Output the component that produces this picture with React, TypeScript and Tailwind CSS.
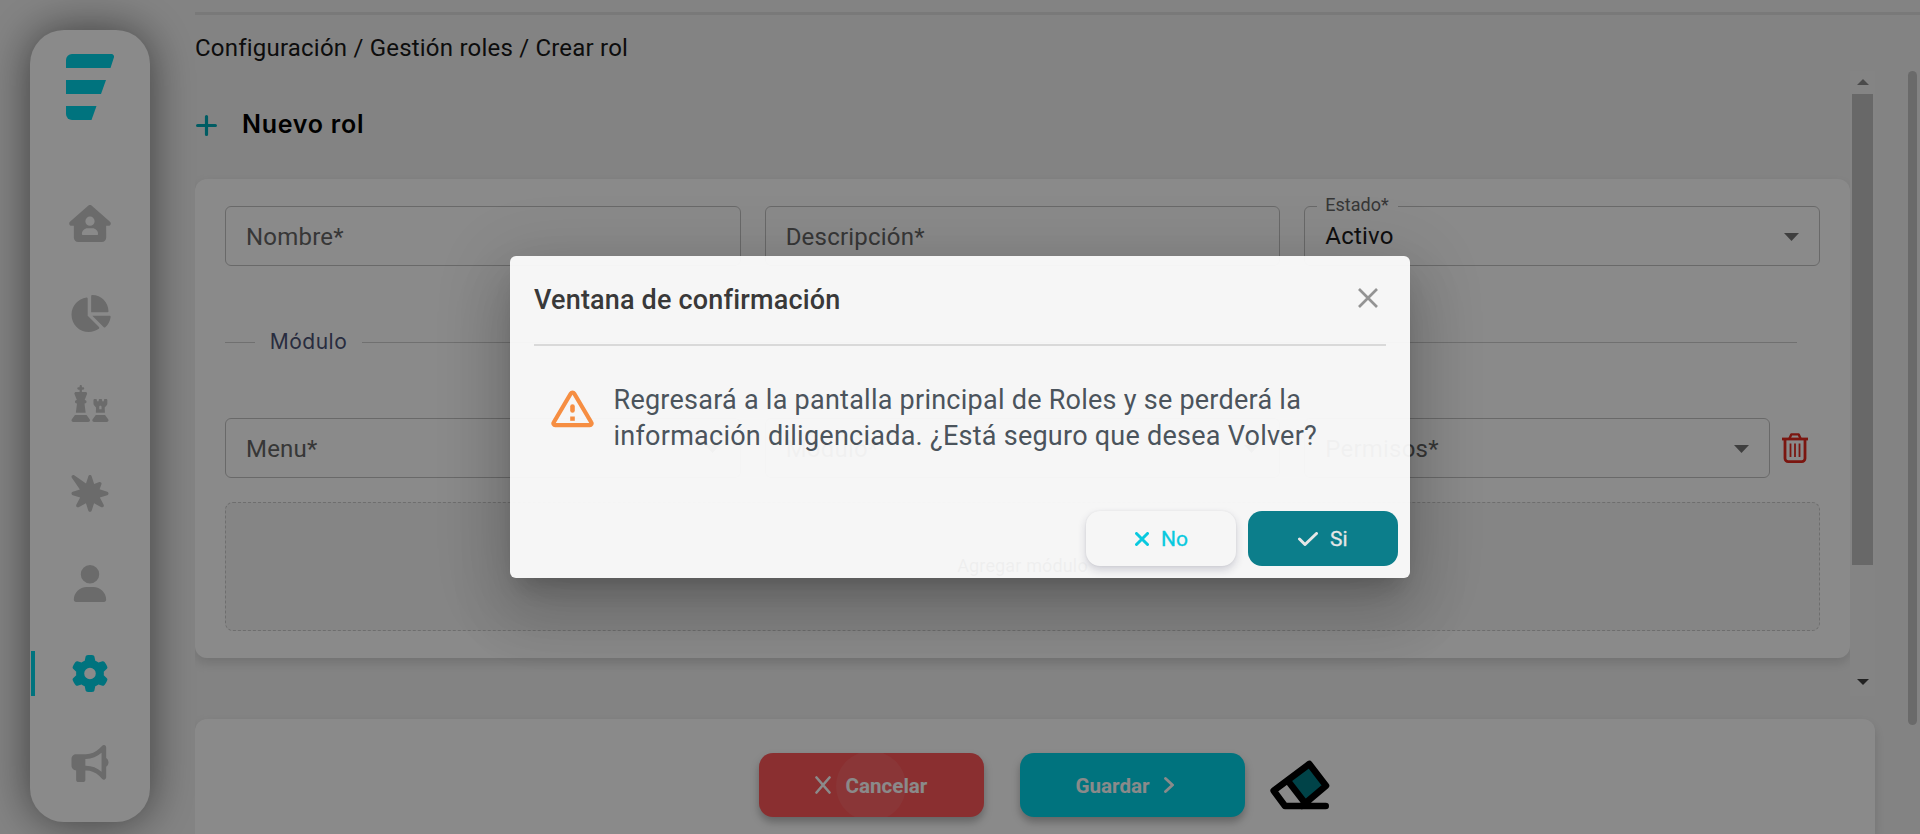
import React from "react";
import {
  FaHouseUser,
  FaChartPie,
  FaChess,
  FaBurst,
  FaUser,
  FaGear,
  FaBullhorn,
} from "react-icons/fa6";

const menu = [
  { icon: FaHouseUser, name: "inicio" },
  { icon: FaChartPie, name: "reportes" },
  { icon: FaChess, name: "estrategia" },
  { icon: FaBurst, name: "eventos" },
  { icon: FaUser, name: "usuarios" },
  { icon: FaGear, name: "configuracion", active: true },
  { icon: FaBullhorn, name: "anuncios" },
];

function Logo() {
  return (
    <svg viewBox="0 0 48 66" className="h-[66px] w-[48px] shrink-0 fill-[#00d5e9]">
      <path d="M0 14V6a6 6 0 0 1 6-6h39.500a2.600 2.600 0 0 1 2.400 3.500L44.500 14Z" />
      <path d="M0 26h40l-5 14H0Z" />
      <path d="M0 52h30.500l-5 14H6a6 6 0 0 1-6-6Z" />
    </svg>
  );
}

function Sidebar() {
  return (
    <aside className="flex h-[792px] w-[120px] shrink-0 flex-col items-center rounded-[34px] bg-white pt-6 shadow-[0_0_45px_rgba(0,0,0,0.54)]">
      <Logo />
      <nav className="mt-[58px] flex w-full flex-col">
        {menu.map(({ icon: Icon, name, active }) => (
          <div key={name} className="flex h-[90px] w-full items-center">
            <div
              className={
                active ? "ml-px h-[45px] w-1 shrink-0 bg-[#00d5e9]" : "ml-px h-[45px] w-1 shrink-0"
              }
            />
            <div className="flex flex-1 justify-center pr-[5px]">
              <Icon className={active ? "h-[37px] w-[42px] text-[#00d5e9]" : "h-[37px] w-[42px] text-[#c6c6c6]"} />
            </div>
          </div>
        ))}
      </nav>
    </aside>
  );
}

function Caret() {
  return (
    <svg viewBox="0 0 15 8" className="mt-px h-[8px] w-[15px] shrink-0 fill-[#757575]">
      <path d="M0 0h15L7.500 8Z" />
    </svg>
  );
}

function Field({ label, caret, grow }: { label: string; caret?: boolean; grow?: boolean }) {
  return (
    <div
      className={
        (grow ? "flex-1 " : "") +
        "flex h-[60px] min-w-0 items-center justify-between rounded-md border border-[#c3c3c3] pr-5 pl-5"
      }
    >
      <span className="mt-[2px] text-[24px] tracking-[0.21px] text-[#666]">{label}</span>
      {caret && <Caret />}
    </div>
  );
}

function StatusField() {
  return (
    <fieldset className="-mt-[13px] flex h-[73px] min-w-0 rounded-md border border-[#c3c3c3] pr-5 pl-[12px]">
      <legend className="h-[26px] pr-[9px] pl-2 text-[18px] leading-[24px] text-[#666]">Estado*</legend>
      <div className="-mt-[13px] flex h-[60px] flex-1 items-center justify-between pl-2">
        <span className="-mt-px text-[24px] tracking-[0.2px] text-[#1c1c1c]">Activo</span>
        <Caret />
      </div>
    </fieldset>
  );
}

function TrashIcon() {
  return (
    <svg viewBox="0 0 26 30" className="h-[30px] w-[26px] shrink-0" fill="none" stroke="#e3291f" strokeLinejoin="round">
      <path d="M0 6h26" strokeWidth="2.800" />
      <path d="M7.500 5.500 9.300 1.400h7.400l1.800 4.100" strokeWidth="2.400" />
      <path d="M3 6v19.500A3.200 3.200 0 0 0 6.200 28.600h13.600a3.200 3.200 0 0 0 3.200-3.100V6" strokeWidth="2.800" />
      <path d="M8.500 10.500v13.500M13 10.500v13.500M17.500 10.500v13.500" strokeWidth="1.800" />
    </svg>
  );
}

function FormCard() {
  return (
    <section className="flex h-[479px] w-[1655px] shrink-0 flex-col rounded-xl bg-white px-[30px] pt-[27px] shadow-[0_5px_12px_rgba(0,0,0,0.14)]">
      <div className="grid w-[1595px] grid-cols-3 gap-6">
        <Field label="Nombre*" />
        <Field label="Descripción*" />
        <StatusField />
      </div>
      <div className="mt-[60px] flex h-8 items-center">
        <div className="h-px w-[30px] bg-[#cfcfcf]" />
        <span className="w-[107px] text-center font-['Inter'] text-[21px] tracking-[0.5px] text-[#4b5275]">
          Módulo
        </span>
        <div className="mr-[23px] h-px flex-1 bg-[#cfcfcf]" />
      </div>
      <div className="mt-[60px] grid w-[1595px] grid-cols-3 gap-6">
        <Field label="Menu*" caret />
        <Field label="Módulo*" caret />
        <div className="flex items-center gap-3 pr-3">
          <Field label="Permisos*" caret grow />
          <TrashIcon />
        </div>
      </div>
      <div className="mt-6 flex h-[129px] flex-col items-center justify-center rounded-lg border border-dashed border-[#cbcbcb] bg-[#f6f6f6] pb-[3px] text-[18px] tracking-[0.15px] text-[#333]">
        Agregar módulo
      </div>
    </section>
  );
}

function InnerScrollbar() {
  return (
    <div className="flex h-[625px] w-[25px] flex-col items-center justify-between bg-[#f4f4f4] pt-[8px] pb-[11px]">
      <div className="flex flex-col items-center">
        <svg viewBox="0 0 12 6" className="h-[6px] w-[12px] fill-[#8b8b8b]">
          <path d="M0 6 6 0l6 6Z" />
        </svg>
        <div className="mt-[9px] h-[471px] w-[21px] bg-[#c1c1c1]" />
      </div>
      <svg viewBox="0 0 12 6" className="h-[6px] w-[12px] fill-[#404040]">
        <path d="M0 0h12L6 6Z" />
      </svg>
    </div>
  );
}

function Eraser() {
  return (
    <svg viewBox="0 0 60 50" className="ml-[25px] h-[50px] w-[60px]" strokeLinejoin="round" strokeLinecap="round">
      <path d="M18.300 20 39.300 4 56 25.700 34.300 43Z" fill="#007c85" />
      <path
        d="M55.700 46H15L3.700 30.700 39.300 4 56 25.700 32 46M18 21l17 22"
        fill="none"
        stroke="#000"
        strokeWidth="6.600"
      />
    </svg>
  );
}

function Actions() {
  return (
    <section className="flex h-[115px] w-[1680px] shrink-0 justify-center rounded-t-xl bg-white pt-[34px] pl-[18px] shadow-[0_5px_12px_rgba(0,0,0,0.14)]">
      <div className="flex h-16">
        <button className="relative flex h-16 w-[225px] items-center overflow-hidden rounded-[14px] bg-[#ff5759] pl-[56px] text-[20.600px] font-bold text-white shadow-[0_5px_9px_rgba(0,0,0,0.28)]">
          <span className="absolute -top-[2px] left-[77px] size-[70px] rounded-full bg-white/8" />
          <svg viewBox="0 0 16 18" className="mr-[15px] h-[18px] w-4" stroke="currentColor" strokeWidth="2.600" strokeLinecap="round">
            <path d="M1.500 1.500 14.500 16.500M14.500 1.500 1.500 16.500" />
          </svg>
          <span className="mt-[2px]">Cancelar</span>
        </button>
        <button className="ml-9 flex h-16 w-[225px] items-center rounded-[14px] bg-[#00d5e9] pl-[56px] text-[20.600px] font-bold text-white shadow-[0_5px_9px_rgba(0,0,0,0.28)]">
          <span className="mt-[2px]">Guardar</span>
          <svg viewBox="0 0 10 16" className="ml-[14px] h-4 w-[10px]" fill="none" stroke="currentColor" strokeWidth="2.800" strokeLinecap="round">
            <path d="m1.500 1.500 7 6.500-7 6.500" />
          </svg>
        </button>
        <div className="flex items-center">
          <Eraser />
        </div>
      </div>
    </section>
  );
}

function Dialog() {
  return (
    <div className="absolute inset-0 flex items-center justify-center bg-black/46">
      <div className="flex h-[322px] w-[900px] flex-col rounded-[6px] bg-white opacity-93 shadow-[0_16px_22px_-10px_rgba(0,0,0,0.2),0_36px_57px_4px_rgba(0,0,0,0.14),0_13px_69px_12px_rgba(0,0,0,0.12)]">
        <div className="mx-6 flex h-[90px] items-center justify-between border-b-2 border-[#dfdfdf] pr-[8px]">
          <h2 className="text-[27px] font-medium tracking-[0.18px] text-[#333]">Ventana de confirmación</h2>
          <svg viewBox="0 0 20 20" className="mb-1 size-5" stroke="#949494" strokeWidth="2.700">
            <path d="M1 1 19 19M19 1 1 19" />
          </svg>
        </div>
        <div className="mt-[36px] flex pl-[41px]">
          <svg viewBox="0 0 43 38" className="mt-[8px] h-[38px] w-[43px] shrink-0" fill="none" stroke="#ff8f3d" strokeLinejoin="round">
            <path d="M19.800 3.500 2.800 32.300a1.800 1.800 0 0 0 1.600 2.900h34.200a1.800 1.800 0 0 0 1.600-2.900L23.200 3.500a2 2 0 0 0-3.400 0Z" strokeWidth="4.200" />
            <path d="M21.500 16.500v4" strokeWidth="4.600" strokeLinecap="round" />
            <path d="M21.500 26.500v4.300" strokeWidth="4.600" />
          </svg>
          <p className="ml-[19.500px] w-[740px] text-[27px] leading-[36px] tracking-[0.25px] text-[#475059]">
            Regresará a la pantalla principal de Roles y se perderá la
            <br />
            información diligenciada. ¿Está seguro que desea Volver?
          </p>
        </div>
        <div className="mt-auto mb-3 flex justify-end gap-3 pr-3">
          <button className="flex h-[55px] w-[150px] items-center rounded-[14px] bg-white pl-[49px] text-[21px] text-[#00cfe6] shadow-[0_4px_8px_rgba(40,40,80,0.2),0_0_2px_rgba(0,0,0,0.08)]">
            <svg viewBox="0 0 14 14" className="mr-3 size-[14px]" stroke="currentColor" strokeWidth="3" strokeLinecap="round">
              <path d="m1.500 1.500 11 11M12.500 1.500l-11 11" />
            </svg>
            <span className="mt-[2px] [-webkit-text-stroke:0.3px]">No</span>
          </button>
          <button className="flex h-[55px] w-[150px] items-center rounded-[14px] bg-[#037e8c] pl-[50px] text-[21px] text-[#eee]">
            <svg viewBox="0 0 20 14" className="mr-3 h-[14px] w-5" fill="none" stroke="currentColor" strokeWidth="3" strokeLinecap="round" strokeLinejoin="round">
              <path d="m1.500 7 5.500 5.500L18.500 1.500" />
            </svg>
            <span className="mt-[2px] [-webkit-text-stroke:0.3px]">Si</span>
          </button>
        </div>
      </div>
    </div>
  );
}

export default function App() {
  return (
    <div className="relative flex h-[834px] w-[1920px] overflow-hidden bg-[#f3f3f3] pt-[30px] pl-[30px] font-['Roboto',sans-serif]">
      <Sidebar />
      <main className="-mt-[18px] ml-[45px] flex h-[822px] w-[1725px] shrink-0 flex-col overflow-hidden">
        <div className="h-[3px] shrink-0 bg-[#dfdfdf]" />
        <div className="flex h-[56px] shrink-0 items-center pt-[10px] text-[24px] tracking-[0.21px] text-[#181818]">
          Configuración / Gestión roles / Crear rol
        </div>
        <div className="flex flex-1">
          <div className="flex w-[1680px] flex-col">
            <div className="flex h-[648px] shrink-0 overflow-hidden">
              <div className="flex w-[1655px] flex-col">
                <div className="flex h-[108px] shrink-0 items-center pl-px">
                  <svg viewBox="0 0 21 21" className="size-[21px]" stroke="#00aab7" strokeWidth="3.200" strokeLinecap="round">
                    <path d="M1.600 10.500h17.800M10.500 1.600v17.800" />
                  </svg>
                  <h1 className="ml-[25px] font-['Inter'] text-[25px] font-semibold tracking-[0.75px] text-black">
                    Nuevo rol
                  </h1>
                </div>
                <FormCard />
              </div>
              <InnerScrollbar />
            </div>
            <Actions />
          </div>
          <div className="ml-[33px] h-[654px] w-[9px] rounded-full bg-[#c4c4c4]" />
        </div>
      </main>
      <Dialog />
    </div>
  );
}
